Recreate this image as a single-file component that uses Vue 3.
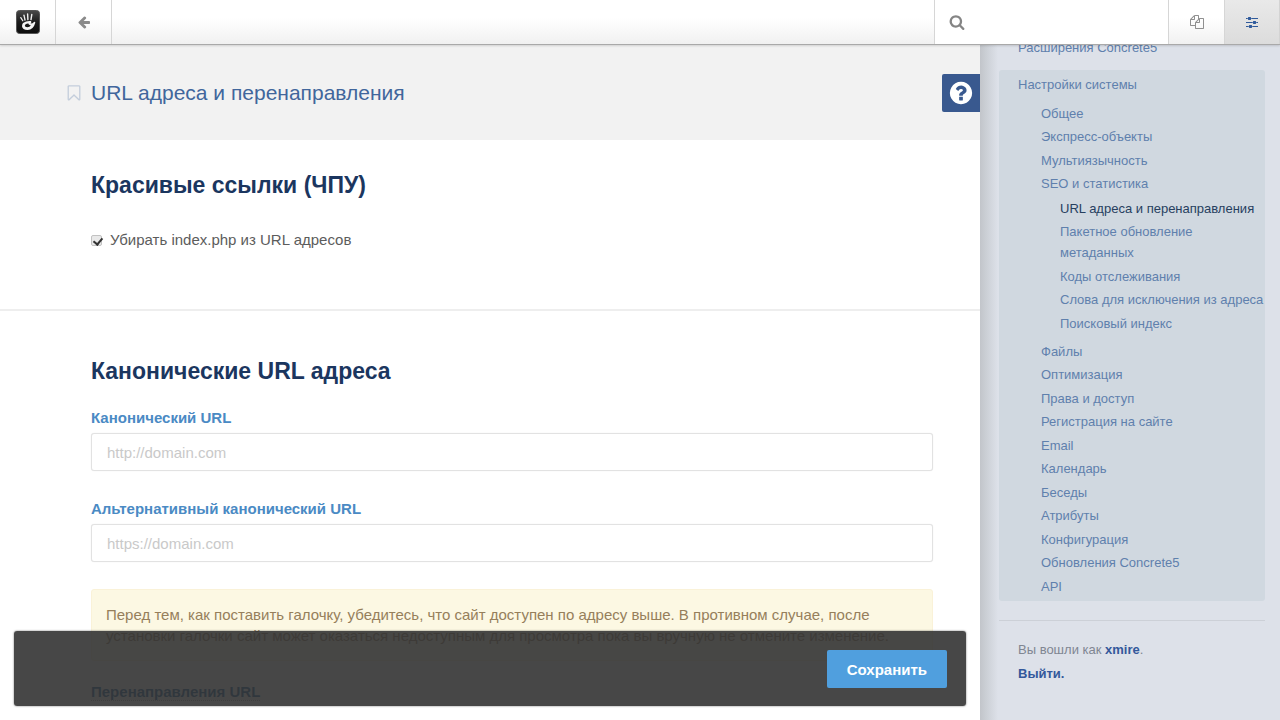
<script setup>
import { ref } from 'vue'

const prettyUrls = ref(true)
const canonical = ref('')
const alternative = ref('')

const seoLinks = [
  { label: 'URL адреса и перенаправления', active: true },
  { label: 'Пакетное обновление метаданных' },
  { label: 'Коды отслеживания' },
  { label: 'Слова для исключения из адреса', nowrap: true },
  { label: 'Поисковый индекс' },
]

const sections = [
  { label: 'Общее' },
  { label: 'Экспресс-объекты' },
  { label: 'Мультиязычность' },
  { label: 'SEO и статистика', children: seoLinks },
  { label: 'Файлы' },
  { label: 'Оптимизация' },
  { label: 'Права и доступ' },
  { label: 'Регистрация на сайте' },
  { label: 'Email' },
  { label: 'Календарь' },
  { label: 'Беседы' },
  { label: 'Атрибуты' },
  { label: 'Конфигурация' },
  { label: 'Обновления Concrete5' },
  { label: 'API' },
]
</script>

<template>
  <div class="page">
    <header class="toolbar">
      <a class="tool logo" href="#" aria-label="Concrete5">
        <svg viewBox="0 0 24 24" width="24" height="24">
          <defs>
            <linearGradient id="badge" x1="0" y1="0" x2="0" y2="1">
              <stop offset="0" stop-color="#4a4a4a" />
              <stop offset="0.5" stop-color="#1c1c1c" />
              <stop offset="1" stop-color="#0c0c0c" />
            </linearGradient>
          </defs>
          <rect x="0.5" y="0.5" width="23" height="23" rx="3" fill="url(#badge)" stroke="#555" />
          <g fill="none" stroke="#f0f0f0" stroke-linecap="round">
            <path d="M4.8 7.6 L6.8 10.8" stroke-width="1.2" />
            <path d="M8 5.2 L9 10" stroke-width="1.3" />
            <path d="M11.6 4 L11.9 9.6" stroke-width="1.4" />
            <path d="M15.8 4.4 L15 9.6" stroke-width="1.4" />
          </g>
          <path
            fill="#f4f4f4"
            fill-rule="evenodd"
            d="M7 13 Q10.6 10.4 15 11 Q16 12.4 14.6 13.4 Q16.8 13.4 18 11.9 Q19.6 11.4 19.2 13 Q17.4 19.8 11.6 20 Q6.4 19.8 6 16.2 Q6 14.2 7 13 Z M8.8 15.4 Q8.8 17.2 11.2 17.2 Q14 17.2 14.8 15 Q12.6 15.2 12.4 13.4 Q9.4 13.2 8.8 15.4 Z"
          />
        </svg>
      </a>
      <button class="tool" type="button" aria-label="Назад">
        <svg viewBox="0 0 1792 1792" width="14" height="14" fill="#8a8a8a">
          <path d="M1664 896v128q0 53-32.5 90.5t-84.5 37.5h-704l293 294q38 36 38 90t-38 90l-75 76q-37 37-90 37-52 0-91-37l-651-652q-37-37-37-90 0-52 37-91l651-650q38-38 91-38 52 0 90 38l75 74q38 38 38 91t-38 91l-293 293h704q52 0 84.5 37.5t32.5 90.5z" />
        </svg>
      </button>
      <label class="search">
        <svg viewBox="0 0 1792 1792" width="16" height="16" fill="#858585">
          <path d="M1216 832q0-185-131.5-316.5t-316.5-131.5-316.5 131.5-131.5 316.5 131.5 316.5 316.5 131.5 316.5-131.5 131.5-316.5zm512 832q0 52-38 90t-90 38q-54 0-90-38l-343-342q-179 124-399 124-143 0-273.5-55.5t-225-150-150-225-55.5-273.5 55.5-273.5 150-225 225-150 273.5-55.5 273.5 55.5 225 150 150 225 55.5 273.5q0 220-124 399l343 343q37 37 37 90z" />
        </svg>
        <input type="search" aria-label="Поиск" />
      </label>
      <button class="tool" type="button" aria-label="Страницы">
        <svg viewBox="0 0 1792 1792" width="14" height="14" fill="#909090">
          <path d="M1696 384q40 0 68 28t28 68v1216q0 40-28 68t-68 28h-960q-40 0-68-28t-28-68v-288h-544q-40 0-68-28t-28-68v-672q0-40 20-88t48-76l408-408q28-28 76-48t88-20h416q40 0 68 28t28 68v328q68-40 128-40h416zm-544 213l-299 299h299v-299zm-640-384l-299 299h299v-299zm196 647l316-316v-416h-384v416q0 40-28 68t-68 28h-416v640h512v-256q0-40 20-88t48-76zm956 804v-1152h-384v416q0 40-28 68t-68 28h-416v640h896z" />
        </svg>
      </button>
      <button class="tool pressed" type="button" aria-label="Панель управления">
        <svg viewBox="0 0 1792 1792" width="14" height="14" fill="#2f5a9b">
          <path d="M480 1408v128h-352v-128h352zm352-128q26 0 45 19t19 45v256q0 26-19 45t-45 19h-256q-26 0-45-19t-19-45v-256q0-26 19-45t45-19h256zm160-384v128h-864v-128h864zm-640-512v128h-224v-128h224zm1312 1024v128h-736v-128h736zm-960-1152q26 0 45 19t19 45v256q0 26-19 45t-45 19h-256q-26 0-45-19t-19-45v-256q0-26 19-45t45-19h256zm640 512q26 0 45 19t19 45v256q0 26-19 45t-45 19h-256q-26 0-45-19t-19-45v-256q0-26 19-45t45-19h256zm320 128v128h-224v-128h224zm0-512v128h-864v-128h864z" />
        </svg>
      </button>
    </header>

    <div class="body">
      <main class="main">
        <div class="title-bar">
          <svg viewBox="0 0 1792 1792" width="18" height="18" fill="#c3cddb" aria-hidden="true">
            <path d="M1408 256h-1024v1242l423-406 89-85 89 85 423 406v-1242zm12-128q23 0 44 9 33 13 52.5 41t19.5 62v1289q0 34-19.5 62t-52.5 41q-19 8-44 8-48 0-83-32l-441-424-441 424q-36 33-83 33-23 0-44-9-33-13-52.5-41t-19.5-62v-1289q0-34 19.5-62t52.5-41q21-9 44-9h1048z" />
          </svg>
          <h1>URL адреса и перенаправления</h1>
          <button class="help" type="button" aria-label="Справка">
            <svg viewBox="0 0 1792 1792" width="26" height="26" fill="#fff">
              <path d="M1024 1376v-192q0-14-9-23t-23-9h-192q-14 0-23 9t-9 23v192q0 14 9 23t23 9h192q14 0 23-9t9-23zm256-672q0-88-55.5-163t-138.5-116-170-41q-243 0-371 213-15 24 8 42l132 100q7 6 19 6 16 0 25-12 53-68 86-92 34-24 86-24 48 0 85.5 26t37.5 59q0 38-20 61t-68 45q-63 28-115.5 86.5t-52.5 125.5v36q0 14 9 23t23 9h192q14 0 23-9t9-23q0-19 21.5-49.5t54.5-49.5q32-18 49-28.5t46-35 44.5-48 28-60.5 12.5-81zm384 192q0 209-103 385.5t-279.5 279.5-385.5 103-385.5-103-279.5-279.5-103-385.5 103-385.5 279.5-279.5 385.5-103 385.5 103 279.5 279.5 103 385.5z" />
            </svg>
          </button>
        </div>

        <form @submit.prevent>
          <section class="group">
            <h2>Красивые ссылки (ЧПУ)</h2>
            <label class="check">
              <input v-model="prettyUrls" type="checkbox" />
              <span>Убирать index.php из URL адресов</span>
            </label>
          </section>

          <section class="group">
            <h2>Канонические URL адреса</h2>
            <div class="field">
              <label for="canonical">Канонический URL</label>
              <input id="canonical" v-model="canonical" type="text" placeholder="http://domain.com" />
            </div>
            <div class="field">
              <label for="alternative">Альтернативный канонический URL</label>
              <input id="alternative" v-model="alternative" type="text" placeholder="https://domain.com" />
            </div>
            <p class="warning">
              Перед тем, как поставить галочку, убедитесь, что сайт доступен по адресу выше. В противном случае, после
              установки галочки сайт может оказаться недоступным для просмотра пока вы вручную не отмените изменение.
            </p>
            <h3><span>Перенаправления URL</span></h3>
          </section>

          <div class="actions">
            <button type="submit">Сохранить</button>
          </div>
        </form>
      </main>

      <aside class="panel">
        <nav>
          <a class="top-link" href="#">Расширения Concrete5</a>
          <div class="current">
            <a class="top-link" href="#">Настройки системы</a>
            <ul class="sections">
              <li v-for="section in sections" :key="section.label">
                <a href="#">{{ section.label }}</a>
                <ul v-if="section.children" class="children">
                  <li v-for="child in section.children" :key="child.label">
                    <a href="#" :class="{ active: child.active, nowrap: child.nowrap }">{{ child.label }}</a>
                  </li>
                </ul>
              </li>
            </ul>
          </div>
        </nav>
        <div class="account">
          <p>Вы вошли как <a href="#">xmire</a>.</p>
          <p><a href="#">Выйти.</a></p>
        </div>
      </aside>
    </div>
  </div>
</template>

<style>
body {
  margin: 0;
  overflow: hidden;
}
</style>

<style scoped>
.page {
  display: flex;
  flex-direction: column;
  height: 100vh;
  overflow: hidden;
  background: #fff;
  color: #5c5c5c;
  font-family: "Liberation Sans", Arial, sans-serif;
  font-size: 15px;
  line-height: 21px;
}

.page * {
  box-sizing: border-box;
}

a {
  text-decoration: none;
}

button,
input {
  font: inherit;
}

ul {
  margin: 0;
  padding: 0;
  list-style: none;
}

.toolbar {
  position: relative;
  z-index: 2;
  display: flex;
  flex: none;
  height: 45px;
  border-bottom: 1px solid #a9a9a9;
  background: linear-gradient(#fff 40%, #f1f1f1);
  box-shadow: 0 1px 2px rgba(0, 0, 0, 0.14);
}

.tool {
  display: flex;
  align-items: center;
  justify-content: center;
  width: 56px;
  padding: 0;
  border: 0;
  border-right: 1px solid #d6d6d6;
  background: none;
}

.search {
  display: flex;
  align-items: center;
  gap: 12px;
  width: 235px;
  margin-left: auto;
  padding: 0 14px;
  border: solid #d6d6d6;
  border-width: 0 1px;
  background: #fff;
}

.search input {
  flex: 1;
  min-width: 0;
  border: 0;
  outline: 0;
  background: none;
}

.pressed {
  width: 55px;
  border-right-color: #d3d3d3;
  background: linear-gradient(#e9e9e9, #dcdcdc);
}

.body {
  display: flex;
  flex: 1;
  min-height: 0;
}

.main {
  position: relative;
  flex: 1;
  min-width: 0;
  overflow: hidden;
}

.title-bar {
  display: flex;
  align-items: center;
  gap: 8px;
  height: 95px;
  padding-left: 65px;
  background: #f2f2f2;
}

h1 {
  margin: 0;
  color: #41669c;
  font-size: 21px;
  font-weight: 400;
  line-height: 28px;
}

.help {
  display: flex;
  align-items: center;
  justify-content: center;
  width: 38px;
  height: 38px;
  margin-left: auto;
  padding: 0;
  border: 0;
  border-radius: 2px 0 0 2px;
  background: #39598f;
}

.group {
  padding: 30px 47px 57px 91px;
}

.group + .group {
  border-top: 2px solid #eee;
  padding-top: 45px;
}

h2 {
  margin: 0 0 28px;
  color: #1b365f;
  font-size: 23px;
  font-weight: 700;
  line-height: 30px;
}

.group + .group h2 {
  margin-bottom: 21px;
}

.check {
  display: flex;
  align-items: center;
  gap: 8px;
  line-height: 24px;
}

.check input {
  position: relative;
  width: 11px;
  height: 11px;
  margin: 0;
  border: 1px solid #c2c2c2;
  border-radius: 2px;
  background: #e9e9e9;
  appearance: none;
}

.check input:checked::after {
  content: "";
  position: absolute;
  top: 0;
  left: 3px;
  width: 4px;
  height: 7px;
  border: solid #333;
  border-width: 0 2px 2px 0;
  transform: rotate(40deg);
}

.field {
  margin-bottom: 27px;
}

.field label {
  display: block;
  margin-bottom: 5px;
  color: #4a8ac4;
  font-weight: 700;
}

.field input {
  display: block;
  width: 100%;
  height: 38px;
  padding: 0 15px;
  border: 1px solid #e2e2e2;
  border-radius: 3px;
  outline: 0;
  background: #fff;
  box-shadow: 0 0 1px #e2e2e2;
  color: #555;
}

.field input::placeholder {
  color: #c9c9c9;
  opacity: 1;
}

.warning {
  margin: 0 0 20px;
  padding: 14px;
  border: 1px solid #faf2d8;
  border-radius: 3px;
  background: #fcf8e3;
  color: #967f5b;
}

h3 {
  margin: 0;
  color: #1d5f9c;
  font-size: 15px;
  line-height: 21px;
}

h3 span {
  border-bottom: 1px dotted #999;
}

.actions {
  position: absolute;
  right: 14px;
  bottom: 14px;
  left: 14px;
  display: flex;
  justify-content: flex-end;
  padding: 19px 19px 18px;
  border-radius: 3px;
  background: rgba(51, 51, 51, 0.9);
  box-shadow: 0 0 2px rgba(0, 0, 0, 0.6);
}

.actions button {
  height: 38px;
  padding: 0 20px;
  border: 0;
  border-radius: 2px;
  background: #509fde;
  color: #fff;
  font-weight: 700;
}

.panel {
  flex: none;
  width: 300px;
  padding: 0 15px 0 19px;
  background: linear-gradient(90deg, #c2c5ca, #cbcfd5 6px, #dde1e9 18px);
  font-size: 13px;
}

.panel a {
  color: #5f80ad;
}

.top-link {
  display: block;
  padding-left: 19px;
}

nav > .top-link {
  margin: -8px 0 12px;
}

.current {
  padding: 4px 0 2px;
  border-radius: 3px;
  background: #d0d8e0;
}

.sections {
  padding: 8px 0 0 42px;
}

.sections li {
  padding-bottom: 2px;
}

.sections li:nth-child(even) {
  padding-bottom: 3px;
}

.sections a {
  display: block;
}

.children {
  padding: 4px 0 2px 19px;
}

.panel .active {
  color: #27405f;
}

.active,
.nowrap {
  white-space: nowrap;
}

.account {
  margin-top: 19px;
  padding: 18px 19px;
  border-top: 1px solid #ccd0d7;
  color: #808692;
}

.account p {
  margin: 0 0 3px;
}

.panel .account a {
  color: #33589b;
  font-weight: 700;
}
</style>
